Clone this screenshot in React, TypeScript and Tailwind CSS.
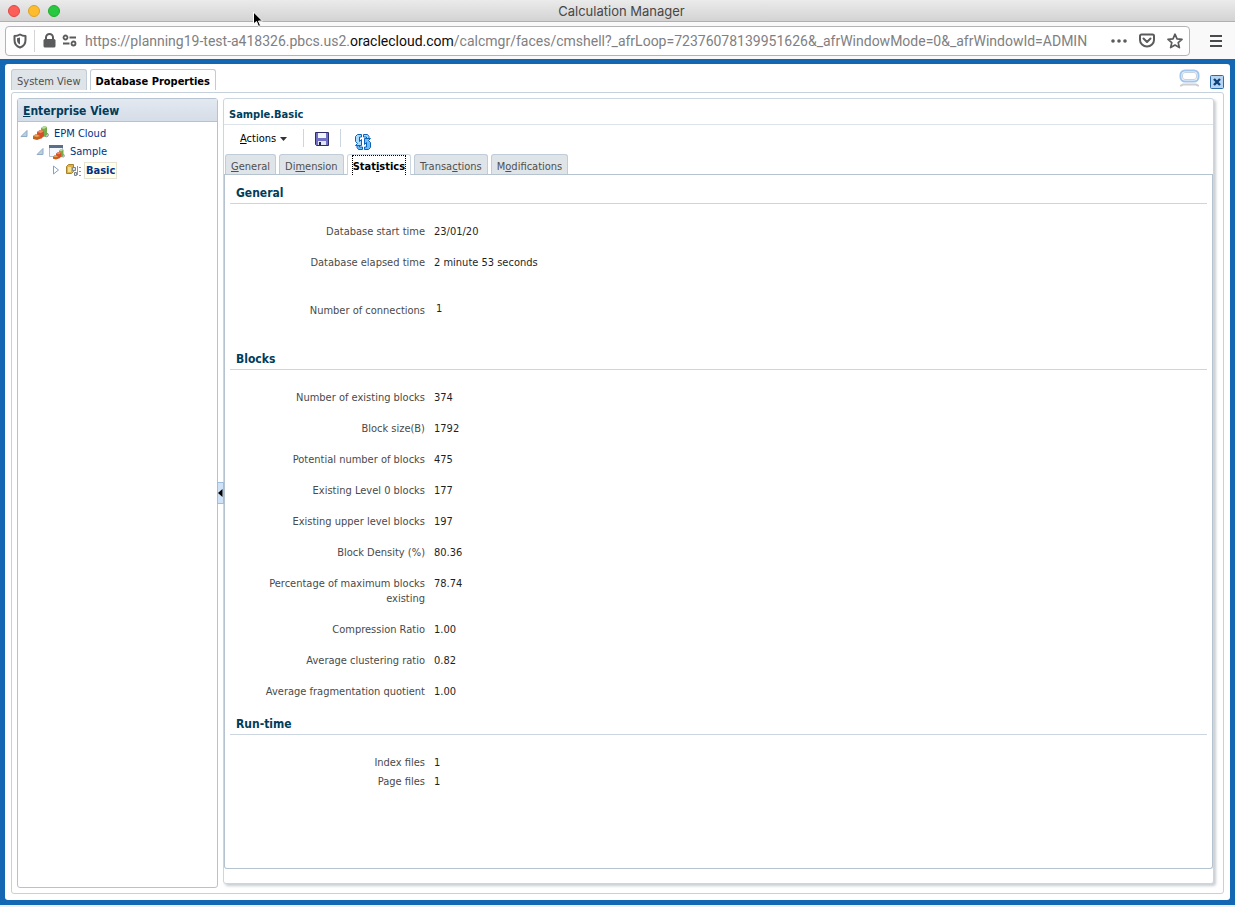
import React from "react";

type Row = { label: string; value: string };

const generalRows: Row[] = [
  { label: "Database start time", value: "23/01/20" },
  { label: "Database elapsed time", value: "2 minute 53 seconds" },
];

const blockRows: Row[] = [
  { label: "Number of existing blocks", value: "374" },
  { label: "Block size(B)", value: "1792" },
  { label: "Potential number of blocks", value: "475" },
  { label: "Existing Level 0 blocks", value: "177" },
  { label: "Existing upper level blocks", value: "197" },
  { label: "Block Density (%)", value: "80.36" },
  { label: "Percentage of maximum blocks existing", value: "78.74" },
  { label: "Compression Ratio", value: "1.00" },
  { label: "Average clustering ratio", value: "0.82" },
  { label: "Average fragmentation quotient", value: "1.00" },
];

const runtimeRows: Row[] = [
  { label: "Index files", value: "1" },
  { label: "Page files", value: "1" },
];

const CubesIcon = () => (
  <g>
    <circle cx="13.500" cy="9" r="1.800" fill="#dfe3e6" stroke="#83898d" />
    <path d="M8 2l3-2 3 1v8l-3 2-3-2z" fill="#76ab4c" />
    <path d="M8 2l3-2 3 1-3 2z" fill="#b9dc98" />
    <path d="M4 6l3-2 4 1v5l-3 3-4-2z" fill="#d4502a" />
    <path d="M4 6l3-2 4 1-3 2z" fill="#f08a62" />
    <path d="M0 10l3-2 4 2v3l-3 1-4-1z" fill="#c4621a" />
    <path d="M0 10l3-2 4 2-3 1z" fill="#e8a05a" />
  </g>
);

const ExpandedArrow = () => (
  <svg width="8" height="8" viewBox="0 0 8 8" aria-hidden="true">
    <path d="M7 .5V6.500H1z" fill="#b9cfe2" stroke="#8fabc6" />
  </svg>
);

const UrlBar = () => (
  <div className="flex h-[37px] shrink-0 items-center bg-[#f9f9fa] pr-3 pl-[5px] font-[family-name:Roboto,sans-serif]">
    <div className="flex h-[30px] min-w-0 grow items-center rounded-[4px] border border-[#b4b4b6] bg-white pr-[6px]">
      <button aria-label="Tracking protection" className="ml-[7px] shrink-0">
        <svg width="14" height="16" viewBox="0 0 14 16" fill="none">
          <path
            d="M7 1.500C5 2.700 3 3 1.500 3v4c0 4 2 6.500 5.500 7.500 3.500-1 5.500-3.500 5.500-7.500V3C11 3 9 2.700 7 1.500z"
            stroke="#5b5b5d"
            strokeWidth="2"
            strokeLinejoin="round"
          />
          <path d="M7 4.500v7C5 10.500 4 9 4 7V5.200z" fill="#5b5b5d" />
        </svg>
      </button>
      <span className="ml-[7px] h-[22px] w-px shrink-0 bg-[#d4d4d6]" />
      <button aria-label="Connection is secure" className="ml-2 shrink-0">
        <svg width="13" height="15" viewBox="0 0 13 15">
          <rect x="0.500" y="6" width="12" height="8.500" rx="1.500" fill="#5b5b5d" />
          <path d="M3 7V4.500a3.500 3.500 0 0 1 7 0V7" fill="none" stroke="#5b5b5d" strokeWidth="2" />
        </svg>
      </button>
      <button aria-label="Permissions" className="ml-[6px] shrink-0">
        <svg width="15" height="13" viewBox="0 0 15 13" fill="none" stroke="#5b5b5d" strokeWidth="1.800">
          <circle cx="3.500" cy="3.500" r="2" />
          <path d="M7.500 3.500H14M1 9.500h6.500" />
          <circle cx="11.500" cy="9.500" r="2" />
        </svg>
      </button>
      <div className="ml-2 min-w-0 grow overflow-hidden text-[14px] leading-5 whitespace-nowrap text-[#808082]">
        https://planning19-test-a418326.pbcs.us2.
        <span className="text-[#0c0c0d]">oraclecloud.com</span>
        /calcmgr/faces/cmshell?_afrLoop=72376078139951626&amp;_afrWindowMode=0&amp;_afrWindowId=ADMIN
      </div>
      <button aria-label="Page actions" className="ml-[6px] shrink-0">
        <svg width="16" height="4" viewBox="0 0 16 4" fill="#5b5b5d">
          <circle cx="2" cy="2" r="1.800" />
          <circle cx="8" cy="2" r="1.800" />
          <circle cx="14" cy="2" r="1.800" />
        </svg>
      </button>
      <button aria-label="Save to Pocket" className="ml-3 shrink-0">
        <svg width="16" height="15" viewBox="0 0 16 15" fill="none" stroke="#5b5b5d" strokeWidth="2">
          <path d="M2.500 1.500h11a1.500 1.500 0 0 1 1.500 1.500v4a7 6.500 0 0 1-14 0V3a1.500 1.500 0 0 1 1.500-1.500z" />
          <path d="M4.500 5.500L8 9l3.500-3.500" strokeLinecap="round" strokeLinejoin="round" />
        </svg>
      </button>
      <button aria-label="Bookmark this page" className="ml-3 shrink-0">
        <svg width="16" height="16" viewBox="0 0 16 16" fill="none" stroke="#5b5b5d" strokeWidth="1.700" strokeLinejoin="round">
          <path d="M8 1.200l2 4.600 5 .5-3.800 3.300 1.200 5L8 12l-4.400 2.600 1.200-5L1 6.300l5-.5z" />
        </svg>
      </button>
    </div>
    <button aria-label="Open menu" className="ml-[19px] shrink-0">
      <svg width="14" height="12" viewBox="0 0 14 12" fill="#4a4a4c">
        <path d="M1 0h12v2H1zM1 5h12v2H1zM1 10h12v2H1z" />
      </svg>
    </button>
  </div>
);

const EnterpriseView = () => (
  <div className="flex w-[201px] shrink-0 flex-col rounded-[3px] border border-[#b5c3d1] bg-white">
    <h2 className="h-[23px] border-b border-[#b5c3d1] bg-linear-to-b from-[#e4e9f0] to-[#d5dde8] pl-[5px] text-[12px] leading-[25px] font-bold text-[#003d5b]">
      <u>E</u>nterprise View
    </h2>
    <ul className="pt-[3px] text-[11px] leading-[18px] text-[#003286]">
      <li className="flex h-[18px] items-center pl-[2px]">
        <ExpandedArrow />
        <svg className="mr-1 mb-[2px] ml-[5px]" width="17" height="15" viewBox="0 0 17 15">
          <CubesIcon />
        </svg>
        <a href="#">EPM Cloud</a>
      </li>
      <li className="flex h-[18px] items-center pl-[18px]">
        <ExpandedArrow />
        <svg className="mr-1 ml-[5px]" width="17" height="15" viewBox="0 0 17 15">
          <path d="M.5 .5h13v11H.5z" fill="#f4f7fb" stroke="#b3bfce" />
          <path d="M0 0h14v3H0z" fill="#5c6f8a" />
          <g transform="translate(4 4) scale(0.750)">
            <CubesIcon />
          </g>
        </svg>
        <a href="#">Sample</a>
      </li>
      <li className="flex h-[18px] items-center pl-[34px]">
        <svg width="8" height="10" viewBox="0 0 8 10">
          <path d="M1.500 1v8L6.500 5z" fill="#fff" stroke="#7fa3c4" />
        </svg>
        <svg className="mr-[3px] ml-[6px]" width="15" height="14" viewBox="0 0 15 14">
          <path d="M.5 3.500l2-2h5v7l-2 2h-5z" fill="#dcb347" stroke="#a8822a" />
          <path d="M2 4h3v5H2z" fill="#f5e08e" />
          <path d="M6.500 4.500h3v3h-3zM8.500 9.500h2v3h-2z" fill="#dfe3e8" stroke="#7b8591" />
          <path d="M11.500 3v9M13 4.500h2M13 8.500h2M13 12.500h2" stroke="#8b939b" />
        </svg>
        <a href="#" className="border border-[#e6e3d3] bg-[#fffdeb] px-px leading-[15px] font-bold">
          Basic
        </a>
      </li>
    </ul>
  </div>
);

const SectionTitle = ({ children }: { children: React.ReactNode }) => (
  <h3 className="h-[21px] border-b border-[#ccd6e0] pl-[6px] text-[12px] leading-[20px] font-bold text-[#003d5b]">
    {children}
  </h3>
);

const Field = ({ label, value, tight }: Row & { tight?: boolean }) => (
  <div className={tight ? "flex py-[2px]" : "flex py-2"}>
    <dt className="w-[195px] shrink-0 pl-[35px] text-right text-[#4a4a4a]">{label}</dt>
    <dd className="ml-[9px] text-[#1f1f1f]">{value}</dd>
  </div>
);

const tabClass =
  "h-[20px] rounded-t-[3px] border border-b-0 border-[#c0ccd8] bg-[#dfe4e8] px-[5px] pt-1 text-[#4f4f4f]";

const DatabasePanel = () => (
  <div className="flex min-w-0 grow flex-col rounded-[3px] border border-[#ccd6e0] bg-white pb-[14px] shadow-[2px_2px_3px_#c9cdd1]">
    <h1 className="h-[26px] border-b border-[#dce3e9] pl-[5px] text-[11px] leading-[31px] font-bold text-[#003d5b]">
      Sample.Basic
    </h1>
    <div className="flex h-[29px] items-center pl-4">
      <button className="flex items-center text-black">
        <span>
          <u>A</u>ctions
        </span>
        <svg className="mb-px ml-1" width="7" height="4" viewBox="0 0 7 4">
          <path d="M0 0h7L3.500 4z" fill="#333" />
        </svg>
      </button>
      <span className="mb-1 ml-4 h-[18px] w-px bg-[#ccd6e0]" />
      <button aria-label="Save" className="mb-[2px] ml-[11px]">
        <svg width="14" height="14" viewBox="0 0 14 14">
          <path d="M.5.5h13v13H1.500l-1-1z" fill="#6f6fc4" stroke="#2c2c6c" />
          <path d="M3 1h8v5H3z" fill="#f2f4fb" />
          <path d="M3 9h8v4H3z" fill="#e4e6f4" />
          <path d="M4 10h2v3H4z" fill="#22225a" />
        </svg>
      </button>
      <span className="mb-1 ml-[11px] h-[18px] w-px bg-[#ccd6e0]" />
      <button aria-label="Refresh" className="mt-1 ml-[14px]">
        <svg width="16" height="16" viewBox="0 0 16 16" stroke="#0b62b8" strokeLinejoin="round">
          {/* left arrow bends down into a head, right arrow mirrors it */}
          <path d="M.5 2.500l2-2h4v2.500h-2v4.500l2-2v6h-6l2-2L.5 7.500z" fill="#a9dcff" />
          <path d="M15.500 13.500l-2 2h-4V13h2V8.500l-2 2v-6h6l-2 2 2 2z" fill="#6cbcf7" />
          <path d="M8.500 .5h4l1.500 2v2h-2.500V3h-3z" fill="#a9dcff" />
          <path d="M7.500 15.500h-4L2 13.500v-2h2.500V13h3z" fill="#6cbcf7" />
        </svg>
      </button>
    </div>
    <div role="tablist" className="flex h-[21px] border-b border-[#b5c3d1] pl-px">
      <button role="tab" className={tabClass}>
        <u>G</u>eneral
      </button>
      <button role="tab" className={`${tabClass} ml-[3px]`}>
        Di<u>m</u>ension
      </button>
      <button
        role="tab"
        aria-selected="true"
        className="ml-[3px] h-[21px] rounded-t-[3px] border border-b-0 border-[#ccd6e0] bg-white px-1 font-bold text-black"
      >
        <span className="block h-full border border-b-0 border-dotted border-black leading-[22px]">
          Stat<u>i</u>stics
        </span>
      </button>
      <button role="tab" className={`${tabClass} ml-[3px]`}>
        Transa<u>c</u>tions
      </button>
      <button role="tab" className={`${tabClass} ml-[3px]`}>
        M<u>o</u>difications
      </button>
    </div>
    <div className="grow rounded-b-[3px] border border-t-0 border-[#b5c3d1] pt-2 pr-[5px] pl-[5px] leading-[15px]">
      <SectionTitle>General</SectionTitle>
      <dl className="pt-3">
        {generalRows.map((row) => (
          <Field key={row.label} {...row} />
        ))}
        <div className="mt-[17px] flex py-2">
          <dt className="w-[195px] shrink-0 pl-[35px] text-right text-[#4a4a4a]">
            Number of connections
          </dt>
          <dd className="-mt-[2px] ml-[11px] text-[#1f1f1f]">1</dd>
        </div>
      </dl>
      <div className="mt-[23px]">
        <SectionTitle>Blocks</SectionTitle>
        <dl className="pt-3">
          {blockRows.map((row) => (
            <Field key={row.label} {...row} />
          ))}
        </dl>
      </div>
      <div className="mt-[7px]">
        <SectionTitle>Run-time</SectionTitle>
        <dl className="pt-[18px]">
          {runtimeRows.map((row) => (
            <Field key={row.label} {...row} tight />
          ))}
        </dl>
      </div>
    </div>
  </div>
);

const App = () => {
  return (
    <div className="relative flex min-h-screen flex-col bg-[#eceff2] pb-[2px] font-[family-name:'DejaVu_Sans_Condensed','DejaVu_Sans',sans-serif] text-[11px]">
      <header className="flex h-[22px] shrink-0 items-center border-b border-[#b0b0b0] bg-linear-to-b from-[#ebebeb] to-[#d3d3d3] font-[family-name:Inter,sans-serif]">
        <div className="flex flex-1 gap-2 pl-2">
          <button aria-label="Close" className="h-3 w-3 rounded-full border border-[#e2463f] bg-[#fc5f57]" />
          <button aria-label="Minimize" className="h-3 w-3 rounded-full border border-[#dfa023] bg-[#fdbc2e]" />
          <button aria-label="Zoom" className="h-3 w-3 rounded-full border border-[#1dad2b] bg-[#28c840]" />
        </div>
        <div className="pt-[2px] text-[13px] text-[#474747]">Calculation Manager</div>
        <div className="flex-1" />
      </header>
      <UrlBar />
      <main className="flex grow flex-col bg-[#1467b3] p-[5px]">
        <div className="flex grow flex-col rounded-[3px] bg-white px-[6px] pt-[5px] pb-[6px]">
          <div className="flex h-[23px] items-start">
            <div role="tablist" className="flex gap-[3px]">
              <button role="tab" className="h-[21px] rounded-t-[3px] border border-b-0 border-[#c0ccd8] bg-[#dfe4e8] px-[5px] pt-1 text-[#4f4f4f]">
                System View
              </button>
              <button
                role="tab"
                aria-selected="true"
                className="h-[21px] rounded-t-[3px] border border-b-0 border-[#c0ccd8] bg-white px-[5px] pt-1 font-bold text-black"
              >
                Database Properties
              </button>
            </div>
            <svg className="mr-[10px] ml-auto" width="21" height="18" viewBox="0 0 21 18" fill="none">
              <rect x="1.500" y="1.500" width="18" height="11" rx="4.500" stroke="#9fc6ef" strokeWidth="2" />
              <rect x="3.500" y="3.500" width="14" height="7" rx="2.500" fill="#fff" stroke="#c9d3dd" />
              <path d="M2 17.500v-1l2-1h13l2 1v1" stroke="#cfcfcf" strokeWidth="2" />
            </svg>
            <button aria-label="Close tab" className="mt-[6px] shrink-0">
              <svg width="14" height="14" viewBox="0 0 14 14">
                <rect x="0.500" y="0.500" width="13" height="13" rx="1" fill="#b5d5f2" stroke="#2d6cab" />
                <path d="M4 4l6 6M10 4l-6 6" stroke="#0d3f78" strokeWidth="2.400" />
              </svg>
            </button>
          </div>
          <div className="flex grow rounded-[3px] border border-[#c6d1dc] p-[5px] pr-[9px]">
            <EnterpriseView />
            <div className="flex w-[5px] shrink-0 items-center">
              <button aria-label="Collapse pane" className="relative z-10 -ml-px h-[22px] w-[7px] shrink-0 border border-[#9dbfe0] bg-[#cfe2f7]">
                <svg width="5" height="8" viewBox="0 0 5 8">
                  <path d="M4.500 0v8L0 4z" fill="#000" />
                </svg>
              </button>
            </div>
            <div className="flex min-w-0 grow pb-1">
              <DatabasePanel />
            </div>
          </div>
        </div>
      </main>
      {/* mouse pointer */}
      <svg className="absolute top-[11px] left-[252px]" width="12" height="17" viewBox="0 0 12 17">
        <path d="M1.500 1v12l3-2.500 2 5 2-1-2-4.500h4z" fill="#000" stroke="#fff" />
      </svg>
    </div>
  );
};

export default App;
